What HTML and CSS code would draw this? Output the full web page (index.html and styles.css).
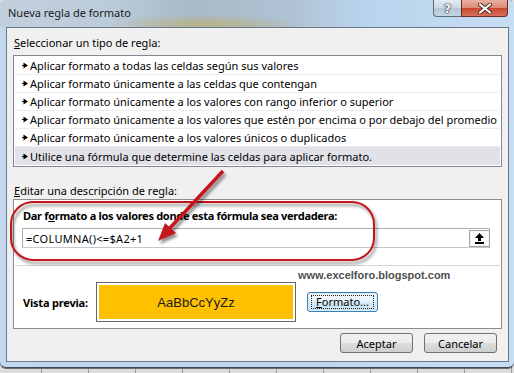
FILE: index.html
```html
<!DOCTYPE html>
<html lang="es">
<head>
	<meta charset="UTF-8">
	<title>Nueva regla de formato</title>
	<link rel="stylesheet" href="styles.css">
</head>
<body>
	<div class="window">
		<div class="titlebar">
			<span class="title">Nueva regla de formato</span>
			<div class="caption">
				<span class="cap-help">?</span>
				<span class="cap-close">
					<svg width="14" height="11" viewBox="0 0 14 11">
						<path d="M2 1.5 L12 9.5 M12 1.5 L2 9.5" stroke="#4a2a26" stroke-width="4" stroke-linecap="round"/>
						<path d="M2 1.5 L12 9.5 M12 1.5 L2 9.5" stroke="#fff" stroke-width="2.2" stroke-linecap="round"/>
					</svg>
				</span>
			</div>
		</div>

		<div class="client">
			<div class="label"><u>S</u>eleccionar un tipo de regla:</div>
			<ul class="rules">
				<li><svg class="bullet" width="6" height="7" viewBox="0 0 6 7"><path d="M0 3h1.5v1H0z M1.5 0.5 L6 3.5 L1.5 6.5z"/></svg>Aplicar formato a todas las celdas según sus valores</li>
				<li><svg class="bullet" width="6" height="7" viewBox="0 0 6 7"><path d="M0 3h1.5v1H0z M1.5 0.5 L6 3.5 L1.5 6.5z"/></svg>Aplicar formato únicamente a las celdas que contengan</li>
				<li><svg class="bullet" width="6" height="7" viewBox="0 0 6 7"><path d="M0 3h1.5v1H0z M1.5 0.5 L6 3.5 L1.5 6.5z"/></svg>Aplicar formato únicamente a los valores con rango inferior o superior</li>
				<li><svg class="bullet" width="6" height="7" viewBox="0 0 6 7"><path d="M0 3h1.5v1H0z M1.5 0.5 L6 3.5 L1.5 6.5z"/></svg>Aplicar formato únicamente a los valores que estén por encima o por debajo del promedio</li>
				<li><svg class="bullet" width="6" height="7" viewBox="0 0 6 7"><path d="M0 3h1.5v1H0z M1.5 0.5 L6 3.5 L1.5 6.5z"/></svg>Aplicar formato únicamente a los valores únicos o duplicados</li>
				<li class="sel"><svg class="bullet" width="6" height="7" viewBox="0 0 6 7"><path d="M0 3h1.5v1H0z M1.5 0.5 L6 3.5 L1.5 6.5z"/></svg>Utilice una fórmula que determine las celdas para aplicar formato.</li>
			</ul>

			<div class="label label-2"><u>E</u>ditar una descripción de regla:</div>
			<div class="desc">
				<div class="desc-title">Dar f<u>o</u>rmato a los valores donde esta fórmula sea verdadera:</div>
				<div class="formula">
					<span class="formula-text">=COLUMNA()&lt;=$A2+1</span>
					<span class="collapse">
						<svg width="9" height="11" viewBox="0 0 9 11"><path d="M4.5 0 L9 5 H6 V8 H3 V5 H0Z M0 9h9v2H0z"/></svg>
					</span>
				</div>
				<div class="sep"></div>
				<div class="preview-row">
					<span class="preview-label">Vista previa:</span>
					<div class="preview"><div class="preview-fill">AaBbCcYyZz</div></div>
					<button class="btn btn-focus"><span class="focus-rect"><u>F</u>ormato...</span></button>
				</div>
			</div>

			<div class="actions">
				<button class="btn">Aceptar</button>
				<button class="btn">Cancelar</button>
			</div>
		</div>
	</div>

	<div class="watermark">www.excelforo.blogspot.com</div>

	<!-- anotaciones en rojo -->
	<svg class="annot" width="514" height="373" viewBox="0 0 514 373">
		<defs>
			<filter id="sh" x="-20%" y="-20%" width="150%" height="160%">
				<feGaussianBlur in="SourceAlpha" stdDeviation="1.5"/>
				<feOffset dx="2" dy="3"/>
				<feComponentTransfer><feFuncA type="linear" slope="0.45"/></feComponentTransfer>
				<feMerge><feMergeNode/><feMergeNode in="SourceGraphic"/></feMerge>
			</filter>
		</defs>
		<rect x="11" y="202" width="363" height="58" rx="22" fill="none" stroke="#c0161e" stroke-width="2" filter="url(#sh)"/>
		<g filter="url(#sh)">
			<line x1="223" y1="171" x2="169" y2="229" stroke="#c4161c" stroke-width="3.5"/>
			<polygon points="158,241 165,223 176,233" fill="#c4161c"/>
		</g>
	</svg>
</body>
</html>
```

FILE: styles.css
```css
* {
	padding: 0;
	margin: 0;
	box-sizing: border-box;
}
ul {
	list-style: none;
}
body {
	width: 514px;
	height: 373px;
	overflow: hidden;
	position: relative;
	font: 11px "Noto Sans", sans-serif;
	color: #000;
	background: #dcdcdc repeating-linear-gradient(to right, #dcdcdc 0, #dcdcdc 41px, #9a9a9a 41px, #9a9a9a 42px, #dcdcdc 42px, #dcdcdc 47px);
}
.window {
	height: 368px;
	background: linear-gradient(to right, #c3d8ee 0, #bdd6f0 50%, #c6def5 100%);
	border-radius: 6px;
	border-bottom: 1px solid #3f4a56;
	box-shadow: 0 1px 0 #6d6d6d;
	display: flex;
	flex-direction: column;
}
.titlebar {
	height: 27px;
	display: flex;
	justify-content: space-between;
	align-items: flex-start;
	border-radius: 6px 6px 0 0;
	background:
		radial-gradient(ellipse 95px 9px at 205px 24px, rgba(186,176,118,.85), rgba(186,176,118,0)),
		linear-gradient(to right, #c2d0dd 0, #bccbd9 110px, #a9b9c8 190px, #afc2d3 290px, #b8d3ec 360px, #c6def4 514px);
}
.title {
	padding: 5px 0 0 8px;
	line-height: 16px;
	color: #1b1b1b;
}
.caption {
	display: flex;
	margin-right: 6px;
}
.cap-help, .cap-close {
	height: 17px;
	display: flex;
	align-items: center;
	justify-content: center;
	border: 1px solid #5e6b79;
	border-top: none;
}
.cap-help {
	width: 28px;
	border-right: none;
	border-radius: 0 0 0 4px;
	background: linear-gradient(#e4ebf3 0, #ccd8e4 50%, #b6c6d6 51%, #c2d3e2 100%);
	font: bold 13px "DejaVu Sans", sans-serif;
	color: #f4f4f4;
	text-shadow: 0 0 1px #333, 0 0 1px #333, 0 0 2px #555;
}
.cap-close {
	width: 47px;
	border-color: #6a2d25;
	border-radius: 0 0 4px 0;
	background: linear-gradient(#eab0a2 0, #dd8874 50%, #c9472f 51%, #d8705a 100%);
}
.client {
	margin: 0 5px 0 6px;
	height: 335px;
	background: #f0f0f0;
	border: 1px solid #6c7886;
	display: flex;
	flex-direction: column;
}
.label {
	line-height: 16px;
	padding-left: 7px;
	margin-top: 7px;
}
.label-2 {
	margin-top: 16px;
}
.rules {
	margin: 4px 6px 0;
	border: 1px solid #828790;
	background: #fff;
	padding: 1px;
}
.rules li {
	height: 18px;
	line-height: 17px;
	padding-left: 7px;
	border-bottom: 1px solid #ececec;
	white-space: nowrap;
	display: flex;
	align-items: center;
}
.rules li:last-child {
	border-bottom: none;
}
.rules li.sel {
	background: #e1e1e8;
}
.bullet {
	margin-right: 2px;
	flex: none;
}
.desc {
	margin: 0 6px;
	height: 130px;
	border: 1px solid #8e8e8e;
	background: #fff;
	padding: 8px 11px 0 8px;
}
.desc-title {
	font-weight: bold;
	letter-spacing: -0.3px;
	line-height: 16px;
	padding-left: 1px;
	white-space: nowrap;
}
.formula {
	margin-top: 4px;
	height: 20px;
	border: 1px solid #abadb3;
	border-bottom-color: #c4c7cc;
	display: flex;
	align-items: center;
	justify-content: space-between;
}
.formula-text {
	padding-left: 3px;
	letter-spacing: 0.3px;
}
.collapse {
	width: 21px;
	height: 17px;
	margin-right: -1px;
	border: 1px solid #a3a3a3;
	background: #fff;
	box-shadow: inset 0 0 0 1px #f4f4f4;
	display: flex;
	align-items: center;
	justify-content: center;
}
.sep {
	height: 1px;
	background: #d6d6d6;
	margin: 17px -10px 0 -7px;
}
.preview-row {
	display: flex;
	align-items: center;
	margin-top: 16px;
	height: 40px;
}
.preview-label {
	width: 74px;
	padding-left: 1px;
	font-weight: bold;
	letter-spacing: -0.2px;
}
.preview {
	width: 200px;
	height: 40px;
	border: 1px solid #666;
	padding: 2px;
	background: #fff;
}
.preview-fill {
	height: 100%;
	background: #ffc000;
	display: flex;
	align-items: center;
	justify-content: center;
	font: 13px "Liberation Sans", sans-serif;
	color: #1a1a1a;
}
.btn {
	width: 73px;
	height: 20px;
	border: 1px solid #707070;
	border-radius: 3px;
	background: linear-gradient(#f2f2f2 0, #ebebeb 50%, #dddddd 51%, #cfcfcf 100%);
	font: 11px "Noto Sans", sans-serif;
	color: #000;
	display: flex;
	align-items: center;
	justify-content: center;
}
.btn-focus {
	width: 71px;
	margin-left: 11px;
	border-color: #3c7fb1;
	background: linear-gradient(#f3f9fd 0, #e6f2fb 50%, #d3e9f8 51%, #c8e3f6 100%);
	box-shadow: inset 0 0 0 1px #d8ecfa;
}
.focus-rect {
	display: block;
	width: 63px;
	height: 14px;
	line-height: 12px;
	border: 1px dotted #222;
	text-align: center;
}
.actions {
	display: flex;
	justify-content: flex-end;
	gap: 11px;
	margin-top: 4px;
	padding-right: 11px;
}
.watermark {
	position: absolute;
	left: 298px;
	top: 269px;
	line-height: 14px;
	font: bold 11px "Liberation Sans", sans-serif;
	color: #505050;
}
.annot {
	position: absolute;
	left: 0;
	top: 0;
	pointer-events: none;
}
```
